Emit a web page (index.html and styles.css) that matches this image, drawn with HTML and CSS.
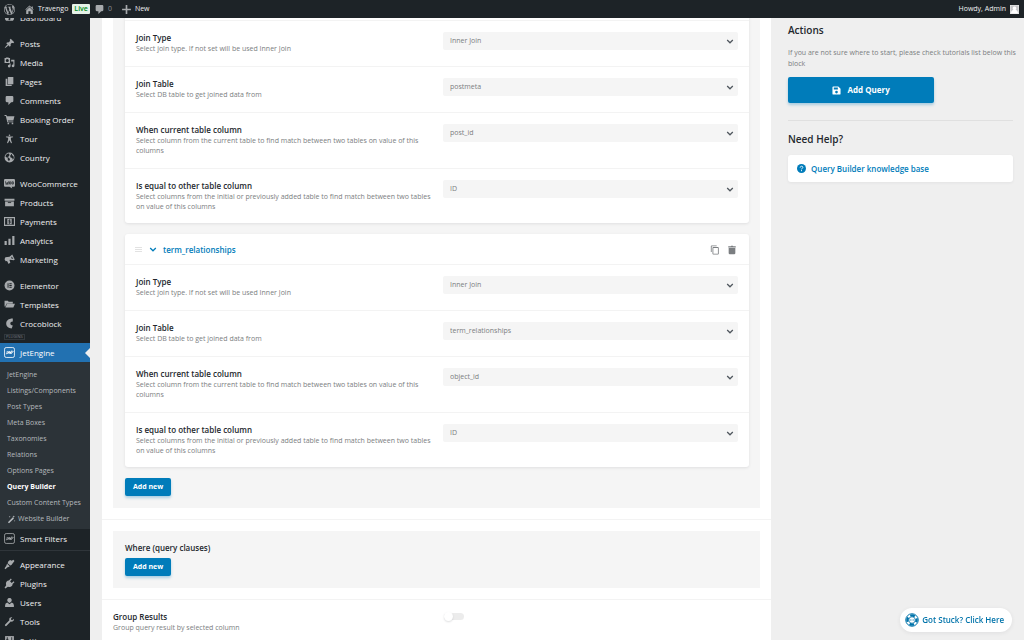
FILE: index.html
```html
<!DOCTYPE html>
<html lang="en">
<head>
<meta charset="utf-8">
<title>Query Builder</title>
<link rel="stylesheet" href="styles.css">
</head>
<body>
<svg class="sprite" aria-hidden="true">
  <symbol id="wp" viewBox="0 0 20 20"><path d="M20 10c0-5.51-4.49-10-10-10C4.48 0 0 4.49 0 10c0 5.52 4.48 10 10 10 5.51 0 10-4.48 10-10zM7.78 15.37L4.37 6.22c.55-.02 1.17-.08 1.17-.08.5-.06.44-1.13-.06-1.11 0 0-1.45.11-2.37.11-.18 0-.37 0-.58-.01C4.12 2.69 6.87 1.11 10 1.11c2.33 0 4.45.87 6.05 2.34-.68-.11-1.65.39-1.65 1.58 0 .74.45 1.36.9 2.1.35.61.55 1.36.55 2.46 0 1.49-1.4 5-1.4 5l-3.03-8.37c.54-.02.82-.17.82-.17.5-.05.44-1.25-.06-1.22 0 0-1.44.12-2.38.12-.87 0-2.33-.12-2.33-.12-.5-.03-.56 1.2-.06 1.22l.92.08 1.26 3.41zM17.41 10c.24-.64.74-1.87.43-4.25.7 1.29 1.05 2.71 1.05 4.25 0 3.29-1.73 6.24-4.4 7.78.97-2.59 1.94-5.2 2.92-7.78zM6.1 18.09C3.12 16.65 1.11 13.53 1.11 10c0-1.3.23-2.48.72-3.59C3.25 10.3 4.67 14.2 6.1 18.09zm4.03-6.63l2.58 6.98c-.86.29-1.76.45-2.71.45-.79 0-1.57-.11-2.29-.33.81-2.38 1.62-4.74 2.42-7.1z"/></symbol>
  <symbol id="home" viewBox="0 0 20 20"><path d="M16 8.5l1.53 1.53-1.06 1.06L10 4.6l-6.47 6.49-1.06-1.06L10 2.5l4 4v-2h2v4zm-6-2.46l6 5.99V18H12v-5H8v5H4v-5.97z"/></symbol>
  <symbol id="comment" viewBox="0 0 20 20"><path d="M5 2h10q2 0 2 2v7q0 2-2 2h-2l-5 5v-5H5q-2 0-2-2V4q0-2 2-2z"/></symbol>
  <symbol id="plus" viewBox="0 0 20 20"><path d="M8.5 2h3v6.500H18v3h-6.500V18h-3v-6.500H2v-3h6.500z"/></symbol>
  <symbol id="dash" viewBox="0 0 20 20"><path d="M3.760 16h12.480A8 8 0 1 0 3.760 16zM10 4a1 1 0 1 1 0 2 1 1 0 0 1 0-2zM6 6a1 1 0 1 1 0 2 1 1 0 0 1 0-2zm8 0a1 1 0 1 1 0 2 1 1 0 0 1 0-2zm-4 9a2 2 0 0 1-1-3.700L12 7l-.500 5.500A2 2 0 0 1 10 15z"/></symbol>
  <symbol id="pin" viewBox="0 0 20 20"><path d="M10.440 3.020l1.820-1.820 6.360 6.350-1.830 1.820c-1.050-.680-2.480-.570-3.410.360l-.750.750c-.920.930-1.040 2.350-.350 3.410l-1.830 1.820-2.410-2.410-2.800 2.790c-.420.420-3.380 2.710-3.800 2.290s1.860-3.390 2.280-3.810l2.790-2.790L4.100 9.360l1.830-1.820c1.050.690 2.480.570 3.400-.360l.750-.750c.930-.920 1.050-2.350.360-3.410z"/></symbol>
  <symbol id="media" viewBox="0 0 20 20"><path fill-rule="evenodd" d="M1 2h2l1-1h4l1 1h2v9H1zm5 1.500a2.800 2.800 0 1 0 0 5.600 2.800 2.800 0 0 0 0-5.600zM13 5h6v11a2.500 2.500 0 1 1-2-2.400V8h-4zM10 12h2v4.500a2.500 2.500 0 1 1-2-2.400z"/></symbol>
  <symbol id="pages" viewBox="0 0 20 20"><path d="M7 2h10v13H7zM3 5h3v11h8v2H3z"/></symbol>
  <symbol id="cart" viewBox="0 0 20 20"><path d="M1 2h3.500l.6 2H19l-2 8H7l.3 1.500H17V15H6L3.300 3.500H1zM6.500 16h2.800v2.800H6.500zM14 16h2.800v2.800H14z"/></symbol>
  <symbol id="person" viewBox="0 0 20 20"><path d="M10 2.600a1.500 1.500 0 1 1 0 3 1.500 1.500 0 0 1 0-3zM3.500 6.200l4.500.3h4l4.500-.3v1.500L12.500 8.500v3.500l2 6-1.700.5L10 13l-2.800 5.500-1.700-.5 2-6V8.500l-4-.8z"/></symbol>
  <symbol id="globe" viewBox="0 0 20 20"><path fill-rule="evenodd" d="M10 1a9 9 0 1 1 0 18 9 9 0 0 1 0-18zM9 2.500C5 2.800 3 5.500 2.600 8L5 10l2 1-.5 2L9 17l2-4-2-2.500-3-1 3-2 1-2zM12 3l1 2-2 2 1 3 3 1 1 3c2-2 2-4 1.500-6L15 6l-1-2.400z"/></symbol>
  <symbol id="woo" viewBox="0 0 20 20"><path d="M2 2h16q2 0 2 2v10q0 2-2 2h-4l1 3-5-3H2q-2 0-2-2V4q0-2 2-2z"/><path d="M2.500 6l1.500 6 2-4 1 4 1.500-6M10 7h2.500v4H10zM14.500 7H17v4h-2.500z" fill="none" stroke="#1d2327" stroke-width="1.300"/></symbol>
  <symbol id="box" viewBox="0 0 20 20"><path d="M1 3h18v4H1zM2 8h16v9H2z"/><path d="M7 9.500h6v1.500H7z" fill="#1d2327"/></symbol>
  <symbol id="pay" viewBox="0 0 20 20"><path fill-rule="evenodd" d="M0 2h20v16H0zm2 2v12h16V4z"/><path d="M6 5h8v10H6z"/><path d="M12 7.500H8.800V10h2.700v2.500H8M10 6v8.500" fill="none" stroke="#1d2327" stroke-width="1.200"/></symbol>
  <symbol id="bars" viewBox="0 0 20 20"><path d="M1 11h4v7H1zM8 7h4v11H8zM15 2h4v16h-4z"/></symbol>
  <symbol id="horn" viewBox="0 0 20 20"><path fill-rule="evenodd" d="M15 1l4.500 9-1.500 1.500-7-1-1 .500 1.500 4.500-3 2.500-3-5.500-2.500.5L1 9.500 2.500 6 10 5zm-1 3.500l-1 3 4 1.500z"/></symbol>
  <symbol id="elem" viewBox="0 0 20 20"><circle cx="10" cy="10" r="9"/><path d="M6.500 6h1.700v8H6.500zM9.700 6H14v1.600H9.700zM9.700 9.200H14v1.600H9.700zM9.700 12.400H14V14H9.700z" fill="#1d2327"/></symbol>
  <symbol id="folder" viewBox="0 0 20 20"><path d="M1 3h6l1.500 2H16v3H5l-3 6-1-1zM5.500 8.500H20l-3 7H2.500z"/></symbol>
  <symbol id="croco" viewBox="0 0 20 20"><path d="M16 1v5.500c-3 0-4.500 1.500-4.500 3.500s1.500 3.500 4.500 3.500L14 19C8 19 4 15 4 10s4-9 12-9z"/></symbol>
  <symbol id="jet" viewBox="0 0 20 20"><rect x="1" y="1" width="18" height="18" rx="3" fill="none" stroke="currentColor" stroke-width="1.500"/><path d="M3.500 12.500c2 0 2-1 2.500-5M6.500 12.500l3-5v5M10 10h3M12 12.500l1-5h2.500M12.500 12.500L17 7.500" fill="none" stroke="currentColor" stroke-width="1.800"/></symbol>
  <symbol id="wand" viewBox="0 0 20 20"><path d="M2 16L13 5l2.500 2.500-11 11zM15 1l.7 2 2 .7-2 .8-.7 2-.8-2-2-.8 2-.7zM6 2l.6 1.500L8 4l-1.400.6L6 6l-.6-1.400L4 4l1.400-.5zM17 11l.6 1.500 1.400.5-1.400.6L17 15l-.6-1.400L15 13l1.400-.5z"/></symbol>
  <symbol id="brush" viewBox="0 0 20 20"><path d="M11 2l3 1 3-1.500 2 2L13.500 11l-2 1-5-4.500L8 4zM5.500 8.500l5 4.500-2 1.500-2 .5-4 3.500L1 17l3-4.500z"/></symbol>
  <symbol id="plug" viewBox="0 0 20 20"><path d="M12.500 1l1.500 1.500-3 3.500 3 3 3.500-3L19 7.500 15.500 11c1 3-3 6-6 5.500L7 16l-4.500 3L1 17.500 4 13l-.5-3C3.500 7 6 4 9 4.500z"/></symbol>
  <symbol id="user" viewBox="0 0 20 20"><path d="M10 2a4 4 0 0 1 2.500 7.200L10 11 7.500 9.200A4 4 0 0 1 10 2zM6 10l4 3 4-3q4 1 4 5v3H2v-3q0-4 4-5z"/></symbol>
  <symbol id="wrench" viewBox="0 0 20 20"><path d="M16.700 9.300c-1.200 1.200-3 1.500-4.500.9l-7.500 7.600a1.700 1.700 0 0 1-2.500-2.500l7.600-7.500c-.6-1.500-.3-3.300.9-4.500C11.900 2.100 13.700 1.800 15.200 2.400L12.500 5l.5 2 2 .5 2.600-2.700c.6 1.500.3 3.300-.9 4.500z"/></symbol>
  <symbol id="sliders" viewBox="0 0 20 20"><path d="M2 2h16v16H2z"/><path d="M6 4v12M14 4v12M4 8h4M12 12h4" stroke="#1d2327" stroke-width="1.500"/></symbol>
  <symbol id="chev" viewBox="0 0 12 8"><path d="M1.500 1.500L6 6l4.500-4.500" fill="none" stroke="currentColor" stroke-width="2"/></symbol>
  <symbol id="copy" viewBox="0 0 24 24"><path d="M16 1H4a2 2 0 0 0-2 2v14h2V3h12zm3 4H8a2 2 0 0 0-2 2v14a2 2 0 0 0 2 2h11a2 2 0 0 0 2-2V7a2 2 0 0 0-2-2zm0 16H8V7h11z"/></symbol>
  <symbol id="trash" viewBox="0 0 24 24"><path d="M4 7h16v13a2 2 0 0 1-2 2H6a2 2 0 0 1-2-2zM3 3h6l1-1h4l1 1h6v3H3z"/></symbol>
  <symbol id="save" viewBox="0 0 20 20"><path fill-rule="evenodd" d="M3 1h11l5 5v11q0 2-2 2H3q-2 0-2-2V3q0-2 2-2zm1 2.500V8h9V3.500zM10 10.500a3 3 0 1 0 0 6 3 3 0 0 0 0-6z"/></symbol>
  <symbol id="help" viewBox="0 0 20 20"><circle cx="10" cy="10" r="10"/><path d="M7 8c0-4 6-4 6-.5 0 2-3 2-3 4.500M10 13.500V16" fill="none" stroke="#fff" stroke-width="2"/></symbol>
  <symbol id="ring" viewBox="0 0 28 28"><circle cx="14" cy="14" r="12.500" fill="none" stroke="currentColor" stroke-width="2"/><circle cx="14" cy="14" r="9" fill="none" stroke="currentColor" stroke-width="5" stroke-dasharray="9.140 5" stroke-dashoffset="4.570"/><circle cx="14" cy="14" r="6.500" fill="#fff" stroke="currentColor" stroke-width="1.500"/><path d="M10 14h1.500M13.200 14h1.600M16.500 14H18" stroke="currentColor" stroke-width="2"/></symbol>
</svg>

<header class="adminbar">
  <a class="bar-item" href="#" aria-label="WordPress"><svg class="icon"><use href="#wp"/></svg></a>
  <a class="bar-item site" href="#"><svg class="icon"><use href="#home"/></svg>Travengo</a>
  <span class="live">Live</span>
  <a class="bar-item count" href="#"><svg class="icon"><use href="#comment"/></svg>0</a>
  <a class="bar-item" href="#"><svg class="icon"><use href="#plus"/></svg>New</a>
  <a class="bar-item account" href="#">Howdy, Admin<svg class="avatar" viewBox="0 0 18 18"><path fill="#eee" d="M0 0h18v18H0z"/><path fill="#c3c4c7" d="M1 1h16v16H1z"/><path fill="#fff" d="M9 3a3.500 3.500 0 0 1 2 6.500c3 .5 5 3 5 7.500H2c0-4.500 2-7 5-7.500A3.500 3.500 0 0 1 9 3z"/></svg></a>
</header>

<div class="shell">
  <nav class="sidebar" aria-label="Admin menu">
    <div class="menu-group">
      <a class="menu-item" href="#"><svg class="icon"><use href="#dash"/></svg>Dashboard</a>
    </div>
    <div class="menu-group">
      <a class="menu-item" href="#"><svg class="icon"><use href="#pin"/></svg>Posts</a>
      <a class="menu-item" href="#"><svg class="icon"><use href="#media"/></svg>Media</a>
      <a class="menu-item" href="#"><svg class="icon"><use href="#pages"/></svg>Pages</a>
      <a class="menu-item" href="#"><svg class="icon"><use href="#comment"/></svg>Comments</a>
      <a class="menu-item" href="#"><svg class="icon"><use href="#cart"/></svg>Booking Order</a>
      <a class="menu-item" href="#"><svg class="icon"><use href="#person"/></svg>Tour</a>
      <a class="menu-item" href="#"><svg class="icon"><use href="#globe"/></svg>Country</a>
    </div>
    <div class="menu-group">
      <a class="menu-item" href="#"><svg class="icon"><use href="#woo"/></svg>WooCommerce</a>
      <a class="menu-item" href="#"><svg class="icon"><use href="#box"/></svg>Products</a>
      <a class="menu-item" href="#"><svg class="icon"><use href="#pay"/></svg>Payments</a>
      <a class="menu-item" href="#"><svg class="icon"><use href="#bars"/></svg>Analytics</a>
      <a class="menu-item" href="#"><svg class="icon"><use href="#horn"/></svg>Marketing</a>
    </div>
    <div class="menu-group last">
      <a class="menu-item" href="#"><svg class="icon"><use href="#elem"/></svg>Elementor</a>
      <a class="menu-item" href="#"><svg class="icon"><use href="#folder"/></svg>Templates</a>
      <a class="menu-item" href="#"><svg class="icon"><use href="#croco"/></svg>Crocoblock</a>
    </div>
    <div class="plugins-label"><span>PLUGINS</span></div>
    <a class="menu-item current" href="#"><svg class="icon"><use href="#jet"/></svg>JetEngine</a>
    <div class="submenu">
      <a href="#">JetEngine</a>
      <a href="#">Listings/Components</a>
      <a href="#">Post Types</a>
      <a href="#">Meta Boxes</a>
      <a href="#">Taxonomies</a>
      <a href="#">Relations</a>
      <a href="#">Options Pages</a>
      <a class="active" href="#">Query Builder</a>
      <a href="#">Custom Content Types</a>
      <a href="#"><svg class="icon small"><use href="#wand"/></svg>Website Builder</a>
    </div>
    <a class="menu-item" href="#"><svg class="icon"><use href="#jet"/></svg>Smart Filters</a>
    <div class="menu-rule"></div>
    <div class="menu-group">
      <a class="menu-item" href="#"><svg class="icon"><use href="#brush"/></svg>Appearance</a>
      <a class="menu-item" href="#"><svg class="icon"><use href="#plug"/></svg>Plugins</a>
      <a class="menu-item" href="#"><svg class="icon"><use href="#user"/></svg>Users</a>
      <a class="menu-item" href="#"><svg class="icon"><use href="#wrench"/></svg>Tools</a>
      <a class="menu-item" href="#"><svg class="icon"><use href="#sliders"/></svg>Settings</a>
    </div>
  </nav>

  <main class="main">
    <section class="block joins">
      <div class="panel">
        <div class="card">
          <div class="card-head"></div>
          <div class="row">
            <div><label class="label" for="a1">Join Type</label><p class="desc">Select join type. If not set will be used Inner Join</p></div>
            <div class="select"><select id="a1"><option>Inner Join</option></select><svg class="chev"><use href="#chev"/></svg></div>
          </div>
          <div class="row">
            <div><label class="label" for="a2">Join Table</label><p class="desc">Select DB table to get joined data from</p></div>
            <div class="select"><select id="a2"><option>postmeta</option></select><svg class="chev"><use href="#chev"/></svg></div>
          </div>
          <div class="row">
            <div><label class="label" for="a3">When current table column</label><p class="desc">Select column from the current table to find match between two tables on value of this columns</p></div>
            <div class="select"><select id="a3"><option>post_id</option></select><svg class="chev"><use href="#chev"/></svg></div>
          </div>
          <div class="row">
            <div><label class="label" for="a4">Is equal to other table column</label><p class="desc">Select columns from the initial or previously added table to find match between two tables on value of this columns</p></div>
            <div class="select"><select id="a4"><option>ID</option></select><svg class="chev"><use href="#chev"/></svg></div>
          </div>
        </div>

        <div class="card">
          <div class="card-head">
            <span class="grip"></span>
            <button class="toggle-title" type="button"><svg class="chev"><use href="#chev"/></svg>term_relationships</button>
            <button class="tool" type="button" aria-label="Duplicate"><svg><use href="#copy"/></svg></button>
            <button class="tool" type="button" aria-label="Delete"><svg><use href="#trash"/></svg></button>
          </div>
          <div class="row">
            <div><label class="label" for="b1">Join Type</label><p class="desc">Select join type. If not set will be used Inner Join</p></div>
            <div class="select"><select id="b1"><option>Inner Join</option></select><svg class="chev"><use href="#chev"/></svg></div>
          </div>
          <div class="row">
            <div><label class="label" for="b2">Join Table</label><p class="desc">Select DB table to get joined data from</p></div>
            <div class="select"><select id="b2"><option>term_relationships</option></select><svg class="chev"><use href="#chev"/></svg></div>
          </div>
          <div class="row">
            <div><label class="label" for="b3">When current table column</label><p class="desc">Select column from the current table to find match between two tables on value of this columns</p></div>
            <div class="select"><select id="b3"><option>object_id</option></select><svg class="chev"><use href="#chev"/></svg></div>
          </div>
          <div class="row">
            <div><label class="label" for="b4">Is equal to other table column</label><p class="desc">Select columns from the initial or previously added table to find match between two tables on value of this columns</p></div>
            <div class="select"><select id="b4"><option>ID</option></select><svg class="chev"><use href="#chev"/></svg></div>
          </div>
        </div>
        <button class="btn" type="button">Add new</button>
      </div>
    </section>

    <section class="block">
      <div class="panel where">
        <h3 class="label">Where (query clauses)</h3>
        <button class="btn" type="button">Add new</button>
      </div>
    </section>

    <section class="block row">
      <div><label class="label" for="group">Group Results</label><p class="desc">Group query result by selected column</p></div>
      <div class="switch-cell"><input class="switch" id="group" type="checkbox" role="switch"></div>
    </section>
  </main>

  <aside class="aside">
    <h2>Actions</h2>
    <p class="hint">If you are not sure where to start, please check tutorials list below this block</p>
    <button class="btn large" type="button"><svg class="icon small"><use href="#save"/></svg>Add Query</button>
    <hr>
    <h2>Need Help?</h2>
    <a class="help" href="#"><svg class="icon small"><use href="#help"/></svg>Query Builder knowledge base</a>
  </aside>
</div>

<button class="stuck" type="button"><svg><use href="#ring"/></svg>Got Stuck? Click Here</button>
</body>
</html>
```
FILE: styles.css
```css
* { box-sizing: border-box; }
body {
  margin: 0;
  height: 100vh;
  overflow: hidden;
  background: #efefef;
  color: #23282d;
  font: 8px/12px "Open Sans", "Noto Sans", sans-serif;
}
a { color: inherit; text-decoration: none; }
button, select { font: inherit; border: 0; }
button { cursor: pointer; }
h2, h3, p { margin: 0; }
.sprite { position: absolute; width: 0; height: 0; }
.icon { width: 11px; height: 11px; flex: none; fill: currentColor; color: #a7aaad; }
.icon.small { width: 9px; height: 9px; color: inherit; }

/* Admin bar */
.adminbar {
  position: fixed;
  inset: 0 0 auto;
  z-index: 2;
  display: flex;
  align-items: center;
  height: 18px;
  padding: 0 5px 0 4px;
  background: #1d2327;
  color: #f0f0f1;
  font-size: 7px;
}
.bar-item { display: flex; align-items: center; gap: 3px; margin-right: 9px; }
.bar-item.site { margin-right: 4px; }
.bar-item.count { color: #8c8f94; }
.live {
  margin-right: 4px;
  padding: 0 2px;
  border-radius: 1px;
  background: #e6f2e8;
  color: #008a20;
  font-weight: 600;
  line-height: 10px;
}
.bar-item.account { margin: 0 0 0 auto; gap: 4px; }
.avatar { width: 9px; height: 9px; }

.shell { display: flex; height: 100%; }

/* Side menu */
.sidebar { flex: none; width: 90px; padding-top: 8px; background: #1d2327; color: #f0f0f1; }
.menu-group { margin-bottom: 7px; }
.menu-group.last { margin-bottom: 0; }
.menu-item {
  position: relative;
  display: flex;
  align-items: center;
  gap: 5px;
  height: 19px;
  padding-left: 4px;
  font-size: 8px;
  white-space: nowrap;
}
.menu-item.current { background: #2271b1; color: #fff; }
.menu-item.current .icon { color: #fff; }
.menu-item.current::after {
  content: "";
  position: absolute;
  right: 0;
  top: 5px;
  border: 5px solid transparent;
  border-left-width: 0;
  border-right-color: #efefef;
}
.plugins-label { height: 10px; padding: 1px 4px; font-size: 4px; line-height: 4px; color: #787c82; }
.plugins-label span { display: inline-block; padding: 0 1px; border: 1px solid #32383d; }
.submenu { padding: 5px 0 2px; background: #2c3338; color: #b5b9bd; font-size: 7px; }
.submenu a {
  display: flex;
  align-items: center;
  gap: 2px;
  height: 16px;
  padding-left: 7px;
  white-space: nowrap;
}
.submenu .active { color: #fff; font-weight: 700; }
.menu-rule { margin: 2px 0 4px; border-top: 1px solid #2f353a; }

/* Query settings */
.main { flex: 1; min-width: 0; margin-left: 12px; background: #fff; }
.block { padding: 11px; border-bottom: 1px solid #f3f3f3; }
.block.joins { margin-top: -21px; padding-top: 0; }
.panel { padding: 11px 11px 12px 12px; background: #f5f5f5; }
.panel.where .label { margin-bottom: 4px; }
.card {
  margin-bottom: 11px;
  border-radius: 3px;
  background: #fff;
  box-shadow: 0 1px 3px rgba(35, 40, 45, .1);
}
.card-head {
  display: flex;
  align-items: center;
  gap: 7px;
  height: 31px;
  padding: 1px 12px 0 10px;
  border-bottom: 1px solid #f3f3f3;
}
.grip { width: 7px; height: 5px; border: solid #e2e2e2; border-width: 1px 0; background: linear-gradient(#e2e2e2, #e2e2e2) center / 100% 1px no-repeat; }
.toggle-title {
  display: flex;
  align-items: center;
  gap: 6px;
  margin-right: auto;
  padding: 0;
  background: none;
  color: #007cba;
  font-weight: 600;
}
.toggle-title .chev, .select .chev { width: 8px; height: 5px; }
.tool { display: flex; padding: 0; background: none; }
.tool svg { width: 10px; height: 10px; fill: #7b7e81; }
.row {
  display: grid;
  grid-template-columns: 1fr 1fr;
  gap: 12px;
  padding: 11px 11px 12px;
  border-bottom: 1px solid #f3f3f3;
}
.card .row:last-child { padding-bottom: 11px; border-bottom: 0; }
.label { display: block; color: #23282d; font-size: 8px; font-weight: 600; line-height: 12px; }
.desc { color: #7b7e81; font-size: 7px; line-height: 10px; }
.select { position: relative; height: 18px; }
.select select {
  width: 100%;
  height: 18px;
  padding: 0 20px 0 7px;
  border-radius: 2px;
  background: #f5f5f5;
  color: #7b7e81;
  font-size: 7px;
  appearance: none;
}
.select .chev { position: absolute; right: 4px; top: 7px; color: #50575e; pointer-events: none; }

.btn {
  display: flex;
  align-items: center;
  justify-content: center;
  height: 18px;
  padding: 0 8px;
  border-radius: 2px;
  background: #007cba;
  box-shadow: 0 2px 3px rgba(0, 124, 186, .3);
  color: #fff;
  font-size: 7px;
  font-weight: 700;
}
.btn.large { gap: 6px; width: 65%; height: 26px; font-size: 8px; }

.switch-cell { padding-top: 2px; }
.switch {
  appearance: none;
  position: relative;
  display: block;
  width: 20px;
  height: 7px;
  margin: 0 1px;
  border-radius: 4px;
  background: #ececec;
}
.switch::before {
  content: "";
  position: absolute;
  left: 0;
  top: -1px;
  width: 9px;
  height: 9px;
  border-radius: 50%;
  background: #fff;
  box-shadow: 0 1px 2px rgba(35, 40, 45, .15);
}

/* Actions column */
.aside { flex: none; width: 225px; margin: 23px 11px 0 17px; }
.aside h2 { font-size: 10px; font-weight: 600; line-height: 14px; }
.hint { margin: 10px -8px 8px 0; color: #7b7e81; font-size: 7px; line-height: 11px; }
.aside hr { margin: 17px 0 11px; border: 0; border-top: 1px solid #e0e0e0; }
.help {
  display: flex;
  align-items: center;
  gap: 5px;
  height: 27px;
  margin-top: 9px;
  padding: 0 9px;
  border-radius: 3px;
  background: #fff;
  box-shadow: 0 1px 3px rgba(35, 40, 45, .06);
  color: #007cba;
  font-weight: 600;
}

.stuck {
  position: fixed;
  right: 12px;
  bottom: 8px;
  display: flex;
  align-items: center;
  gap: 3px;
  height: 24px;
  padding: 0 8px 0 5px;
  border-radius: 12px;
  background: #fff;
  box-shadow: 0 1px 4px rgba(35, 40, 45, .08);
  color: #0073aa;
  font-size: 8px;
  font-weight: 600;
}
.stuck svg { width: 14px; height: 14px; }
```
